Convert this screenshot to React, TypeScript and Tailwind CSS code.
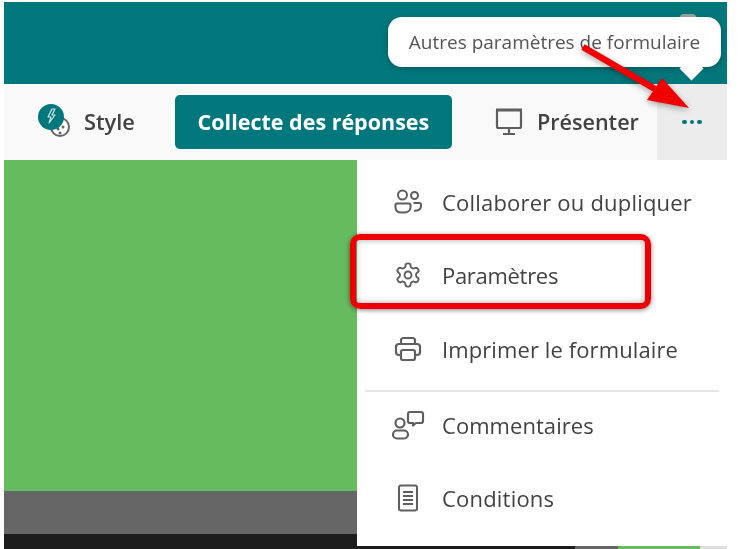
export default function App() {
  const items = [
    { label: "Collaborer ou dupliquer", track: "tracking-[0.2px]", icon: <svg width="30" height="30" viewBox="0 0 30 30" fill="none" stroke="#5f5f5f" strokeWidth="2"><circle cx="9.5" cy="8" r="4.5"/><circle cx="21.5" cy="8.5" r="3.5"/><path d="M4 16.5h12a1.5 1.5 0 0 1 1.5 1.5v2.5c0 3-3 5-7 5h-2c-4 0-6-2-6-5V18a1.5 1.5 0 0 1 1.5-1.5Z"/><path d="M20.5 16h6a1.5 1.5 0 0 1 1.5 1.5v1.5c0 3-2.5 5-7 4.8"/></svg> },
    { label: "Paramètres", track: "tracking-[-0.3px]", icon: <svg width="28" height="28" viewBox="0 0 24 24" fill="none" stroke="#5f5f5f" strokeWidth="1.6" strokeLinejoin="round"><path d="M12.22 2h-.44a2 2 0 0 0-2 2v.18a2 2 0 0 1-1 1.73l-.43.25a2 2 0 0 1-2 0l-.15-.08a2 2 0 0 0-2.73.73l-.22.38a2 2 0 0 0 .73 2.73l.15.1a2 2 0 0 1 1 1.72v.51a2 2 0 0 1-1 1.74l-.15.09a2 2 0 0 0-.73 2.73l.22.38a2 2 0 0 0 2.73.73l.15-.08a2 2 0 0 1 2 0l.43.25a2 2 0 0 1 1 1.73V20a2 2 0 0 0 2 2h.44a2 2 0 0 0 2-2v-.18a2 2 0 0 1 1-1.73l.43-.25a2 2 0 0 1 2 0l.15.08a2 2 0 0 0 2.73-.73l.22-.39a2 2 0 0 0-.73-2.73l-.15-.08a2 2 0 0 1-1-1.74v-.5a2 2 0 0 1 1-1.74l.15-.09a2 2 0 0 0 .73-2.73l-.22-.38a2 2 0 0 0-2.73-.73l-.15.08a2 2 0 0 1-2 0l-.43-.25a2 2 0 0 1-1-1.73V4a2 2 0 0 0-2-2z"/><circle cx="12" cy="12" r="3"/></svg> },
    { label: "Imprimer le formulaire", track: "tracking-[0.1px]", icon: <svg width="30" height="30" viewBox="0 0 30 30" fill="none" stroke="#5f5f5f" strokeWidth="2.2" strokeLinejoin="round"><path d="M8 10V6.5A2.5 2.5 0 0 1 10.5 4h9A2.5 2.5 0 0 1 22 6.5V10"/><path d="M8 21H6a3 3 0 0 1-3-3v-5a3 3 0 0 1 3-3h18a3 3 0 0 1 3 3v5a3 3 0 0 1-3 3h-2"/><rect x="8" y="16" width="14" height="10" rx="2"/></svg> },
  ];
  const after = [
    { label: "Commentaires", track: "tracking-[0.05px]", icon: <svg width="34" height="32" viewBox="0 0 34 32" fill="none" stroke="#5f5f5f" strokeWidth="2.2" strokeLinejoin="round"><circle cx="9" cy="14" r="4.5"/><rect x="2" y="21.5" width="15" height="8" rx="4"/><path d="M19 3h11a2 2 0 0 1 2 2v7a2 2 0 0 1-2 2h-5l-3 2.5V14h-3a2 2 0 0 1-2-2V5a2 2 0 0 1 2-2Z"/></svg> },
    { label: "Conditions", track: "tracking-[0.2px]", icon: <svg width="30" height="30" viewBox="0 0 30 30" fill="none" stroke="#5f5f5f" strokeWidth="2"><rect x="6" y="2.5" width="18" height="25" rx="2"/><path d="M10 9h10M10 13h10M10 17h10M10 21h10"/></svg> },
  ];
  const Row = ({ label, icon, h, track }: { label: string; icon: React.ReactNode; h: string; track: string }) => (
    <div className={`flex items-center ${h}`}>
      <div className="flex w-[85px] shrink-0 justify-center pl-[16px]">{icon}</div>
      <span className={`text-[22px] leading-none text-[#424242] ${track}`}>{label}</span>
    </div>
  );
  return (
    <div className="relative flex h-[549px] w-[738px] flex-col overflow-hidden bg-white pl-1 pr-[11px] pt-[2px] blur-[0.5px]" style={{ fontFamily: '"Open Sans","Noto Sans",sans-serif' }}>
      <div className="h-[82px] shrink-0 bg-[#03787c]" />
      <div className="flex h-[76px] shrink-0 items-center bg-[#f9f9f9]">
        <div className="relative ml-[34px] h-[40px] w-[36px] shrink-0">
          <svg width="36" height="40" viewBox="0 0 36 40">
            <circle cx="22" cy="25" r="9" fill="#fff" stroke="#666" strokeWidth="2"/>
            <circle cx="20" cy="27" r="1.5" fill="#666"/><circle cx="25" cy="25" r="1.5" fill="#666"/><circle cx="22" cy="31" r="1.5" fill="#666"/>
            <circle cx="13" cy="15" r="13" fill="#03787c"/>
            <path d="M14 7l-4 8h3l-2 6 6-8h-3l3-6z" fill="none" stroke="#cfe8e8" strokeWidth="1.2" strokeLinejoin="round"/>
          </svg>
        </div>
        <span className="ml-[10px] text-[21.8px] font-semibold text-[#424242]">Style</span>
        <div className="ml-[40px] flex h-[54px] w-[277px] items-center justify-center rounded-[5px] bg-[#03787c] text-[21.5px] font-bold text-white">Collecte des réponses</div>
        <svg className="ml-[42px]" width="30" height="30" viewBox="0 0 30 30" fill="none" stroke="#5f5f5f" strokeWidth="2.2"><path d="M2 3h26" strokeWidth="3"/><rect x="3" y="3" width="24" height="18" rx="1.5"/><path d="M15 21v5M9 27h12" /></svg>
        <span className="ml-[13px] text-[21.6px] font-semibold text-[#424242]">Présenter</span>
        <div className="ml-auto flex h-full w-[70px] items-center justify-center gap-[3px] bg-[#ececec]">
          <span className="size-[4.5px] rounded-full bg-[#03787c]" /><span className="size-[4.5px] rounded-full bg-[#03787c]" /><span className="size-[4.5px] rounded-full bg-[#03787c]" />
        </div>
      </div>
      <div className="flex min-h-0 flex-1">
        <div className="flex w-[353px] shrink-0 flex-col">
          <div className="h-[331px] bg-[#66bb5f]" />
          <div className="h-[43px] bg-[#666666]" />
          <div className="flex-1 bg-[#1c1c1c]" />
        </div>
        <div className="flex flex-1 flex-col">
          <div className="flex h-[386px] flex-col bg-white pt-[5px]">
            <div className="flex h-[231px] flex-col">
              {items.map((it) => <Row key={it.label} {...it} h="h-[73.5px]" />)}
            </div>
            <div className="mx-[8px] mb-[-4px] mt-[-6px] h-[2px] shrink-0 bg-[#e6e6e6]" />
            {after.map((it) => <Row key={it.label} {...it} h="h-[73px]" />)}
          </div>
          <div className="flex h-[3px] bg-[#1c1c1c]">
            <div className="w-[218px]" /><div className="w-[43px] bg-[#666]" /><div className="w-[82px] bg-[#66bb5f]" /><div className="flex-1 bg-[#dddddd]" />
          </div>
        </div>
      </div>
      {/* tooltip */}
      <div className="absolute left-[679px] top-[14px] h-[10px] w-[18px] rounded-full bg-[#9aa5a6]" />
      <div className="absolute left-[388px] top-[17px] flex h-[50px] w-[333px] items-center justify-center rounded-[14px] bg-white text-[19px] text-[#555] shadow-[0_2px_6px_rgba(0,0,0,0.25)]">Autres paramètres de formulaire</div>
      <div className="absolute left-[683px] top-[60px] size-[17px] rotate-45 bg-white" />
      {/* red annotations */}
      <svg className="absolute left-[570px] top-[40px]" width="130" height="75" viewBox="0 0 130 75" style={{ filter: "drop-shadow(0 2px 3px rgba(0,0,0,0.35))" }}>
        <path d="M13 7L85 49" stroke="#f00000" strokeWidth="6.5" />
        <path d="M119 68L77 60L92 38Z" fill="#f00000" />
      </svg>
      <div className="absolute left-[350px] top-[234px] h-[75px] w-[301px] rounded-[10px] border-[6px] border-[#ee0000] shadow-[0_1px_5px_rgba(0,0,0,0.5),inset_0_0_6px_rgba(0,0,0,0.35)]" />
    </div>
  );
}
